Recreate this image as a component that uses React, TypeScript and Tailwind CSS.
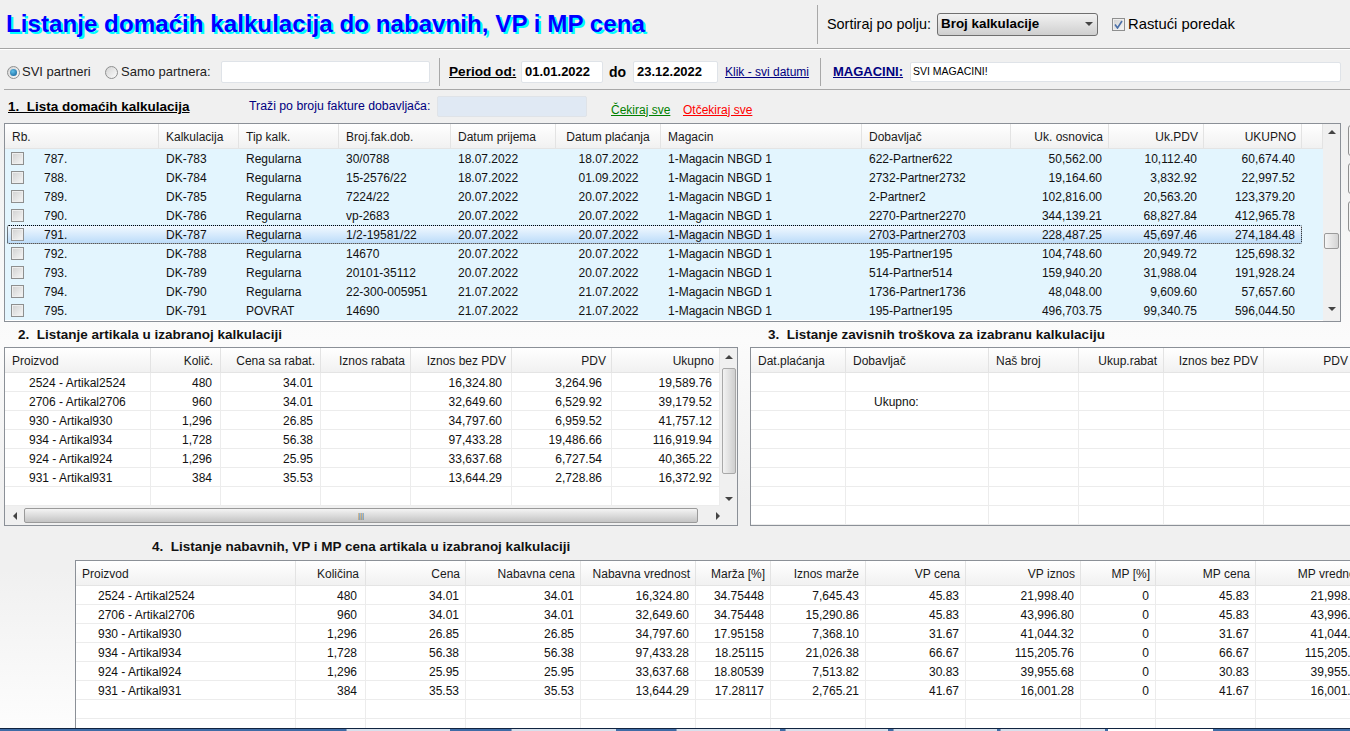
import type { ReactNode } from "react";

type Col = { label: string; head: string; cell: string };

const L = "pl-[7px] text-left";
const R = "pr-[7px] text-right";

const MAIN_COLS: Col[] = [
  { label: "Rb.", head: L, cell: L },
  { label: "Kalkulacija", head: L, cell: L },
  { label: "Tip kalk.", head: L, cell: L },
  { label: "Broj.fak.dob.", head: L, cell: L },
  { label: "Datum prijema", head: L, cell: L },
  { label: "Datum plaćanja", head: "text-center", cell: "text-center" },
  { label: "Magacin", head: L, cell: L },
  { label: "Dobavljač", head: L, cell: L },
  { label: "Uk. osnovica", head: "pr-[5px] text-right", cell: R },
  { label: "Uk.PDV", head: "pr-[5px] text-right", cell: R },
  { label: "UKUPNO", head: "pr-[5px] text-right", cell: R },
  { label: "", head: "", cell: "" },
];

const MAIN_ROWS = [
  ["787.", "DK-783", "Regularna", "30/0788", "18.07.2022", "18.07.2022", "1-Magacin NBGD 1", "622-Partner622", "50,562.00", "10,112.40", "60,674.40", ""],
  ["788.", "DK-784", "Regularna", "15-2576/22", "18.07.2022", "01.09.2022", "1-Magacin NBGD 1", "2732-Partner2732", "19,164.60", "3,832.92", "22,997.52", ""],
  ["789.", "DK-785", "Regularna", "7224/22", "20.07.2022", "20.07.2022", "1-Magacin NBGD 1", "2-Partner2", "102,816.00", "20,563.20", "123,379.20", ""],
  ["790.", "DK-786", "Regularna", "vp-2683", "20.07.2022", "20.07.2022", "1-Magacin NBGD 1", "2270-Partner2270", "344,139.21", "68,827.84", "412,965.78", ""],
  ["791.", "DK-787", "Regularna", "1/2-19581/22", "20.07.2022", "20.07.2022", "1-Magacin NBGD 1", "2703-Partner2703", "228,487.25", "45,697.46", "274,184.48", ""],
  ["792.", "DK-788", "Regularna", "14670", "20.07.2022", "20.07.2022", "1-Magacin NBGD 1", "195-Partner195", "104,748.60", "20,949.72", "125,698.32", ""],
  ["793.", "DK-789", "Regularna", "20101-35112", "20.07.2022", "20.07.2022", "1-Magacin NBGD 1", "514-Partner514", "159,940.20", "31,988.04", "191,928.24", ""],
  ["794.", "DK-790", "Regularna", "22-300-005951", "21.07.2022", "21.07.2022", "1-Magacin NBGD 1", "1736-Partner1736", "48,048.00", "9,609.60", "57,657.60", ""],
  ["795.", "DK-791", "POVRAT", "14690", "21.07.2022", "21.07.2022", "1-Magacin NBGD 1", "195-Partner195", "496,703.75", "99,340.75", "596,044.50", ""],
];

const ITEM_COLS: Col[] = [
  { label: "Proizvod", head: L, cell: "pl-[24px] text-left" },
  { label: "Količ.", head: R, cell: "pr-[8px] text-right" },
  { label: "Cena sa rabat.", head: "pr-[5px] text-right", cell: R },
  { label: "Iznos rabata", head: "pr-[5px] text-right", cell: R },
  { label: "Iznos bez PDV", head: "pr-[5px] text-right", cell: "pr-[9px] text-right" },
  { label: "PDV", head: "pr-[5px] text-right", cell: "pr-[9px] text-right" },
  { label: "Ukupno", head: "pr-[5px] text-right", cell: R },
];

const ITEM_ROWS = [
  ["2524 - Artikal2524", "480", "34.01", "", "16,324.80", "3,264.96", "19,589.76"],
  ["2706 - Artikal2706", "960", "34.01", "", "32,649.60", "6,529.92", "39,179.52"],
  ["930 - Artikal930", "1,296", "26.85", "", "34,797.60", "6,959.52", "41,757.12"],
  ["934 - Artikal934", "1,728", "56.38", "", "97,433.28", "19,486.66", "116,919.94"],
  ["924 - Artikal924", "1,296", "25.95", "", "33,637.68", "6,727.54", "40,365.22"],
  ["931 - Artikal931", "384", "35.53", "", "13,644.29", "2,728.86", "16,372.92"],
  ["", "", "", "", "", "", ""],
];

const COST_COLS: Col[] = [
  { label: "Dat.plaćanja", head: L, cell: L },
  { label: "Dobavljač", head: L, cell: "pl-[28px] text-left" },
  { label: "Naš broj", head: L, cell: L },
  { label: "Ukup.rabat", head: "pr-[6px] text-right", cell: R },
  { label: "Iznos bez PDV", head: "pr-[5px] text-right", cell: R },
  { label: "PDV", head: "pr-[2px] text-right", cell: R },
];

const COST_ROWS = Array.from({ length: 8 }, (_, i) =>
  i === 1 ? ["", "Ukupno:", "", "", "", ""] : ["", "", "", "", "", ""],
);

const PRICE_COLS: Col[] = [
  { label: "Proizvod", head: "pl-[6px] text-left", cell: "pl-[22px] text-left" },
  { label: "Količina", head: "pr-[6px] text-right", cell: "pr-[8px] text-right" },
  { label: "Cena", head: "pr-[5px] text-right", cell: "pr-[6px] text-right" },
  { label: "Nabavna cena", head: "pr-[5px] text-right", cell: "pr-[6px] text-right" },
  { label: "Nabavna vrednost", head: "pr-[5px] text-right", cell: "pr-[6px] text-right" },
  { label: "Marža [%]", head: "pr-[5px] text-right", cell: "pr-[6px] text-right" },
  { label: "Iznos marže", head: "pr-[6px] text-right", cell: "pr-[6px] text-right" },
  { label: "VP cena", head: "pr-[5px] text-right", cell: "pr-[6px] text-right" },
  { label: "VP iznos", head: "pr-[5px] text-right", cell: "pr-[6px] text-right" },
  { label: "MP [%]", head: "pr-[5px] text-right", cell: "pr-[6px] text-right" },
  { label: "MP cena", head: "pr-[5px] text-right", cell: "pr-[6px] text-right" },
  { label: "MP vrednost", head: "pr-[5px] text-right", cell: "pr-[6px] text-right" },
];

const PRICE_ROWS = [
  ["2524 - Artikal2524", "480", "34.01", "34.01", "16,324.80", "34.75448", "7,645.43", "45.83", "21,998.40", "0", "45.83", "21,998.40"],
  ["2706 - Artikal2706", "960", "34.01", "34.01", "32,649.60", "34.75448", "15,290.86", "45.83", "43,996.80", "0", "45.83", "43,996.80"],
  ["930 - Artikal930", "1,296", "26.85", "26.85", "34,797.60", "17.95158", "7,368.10", "31.67", "41,044.32", "0", "31.67", "41,044.32"],
  ["934 - Artikal934", "1,728", "56.38", "56.38", "97,433.28", "18.25115", "21,026.38", "66.67", "115,205.76", "0", "66.67", "115,205.76"],
  ["924 - Artikal924", "1,296", "25.95", "25.95", "33,637.68", "18.80539", "7,513.82", "30.83", "39,955.68", "0", "30.83", "39,955.68"],
  ["931 - Artikal931", "384", "35.53", "35.53", "13,644.29", "17.28117", "2,765.21", "41.67", "16,001.28", "0", "41.67", "16,001.28"],
  ["", "", "", "", "", "", "", "", "", "", "", ""],
  ["", "", "", "", "", "", "", "", "", "", "", ""],
];

function Arrow({ dir }: { dir: "up" | "down" | "left" | "right" }) {
  const points = {
    up: "0,5 8,5 4,1",
    down: "0,1 8,1 4,5",
    left: "5,0 5,8 1,4",
    right: "1,0 1,8 5,4",
  }[dir];
  const box = dir === "up" || dir === "down" ? "0 0 8 6" : "0 0 6 8";
  return (
    <svg viewBox={box} className={dir === "up" || dir === "down" ? "h-[6px] w-[8px]" : "h-[8px] w-[6px]"}>
      <polygon points={points} fill="#444" />
    </svg>
  );
}

function Check({ on = false }: { on?: boolean }) {
  return (
    <span className="flex h-[13px] w-[13px] shrink-0 items-center justify-center border border-[#8e8f8f] bg-gradient-to-br from-[#d0d0d0] to-[#f7f7f7] shadow-[inset_0_0_0_1px_#eeeeee]">
      {on ? (
        <svg viewBox="0 0 9 9" className="h-[9px] w-[9px]">
          <path d="M1 4.5 L3.5 8 L8 1" fill="none" stroke="#4a6fa8" strokeWidth="1.6" />
        </svg>
      ) : null}
    </span>
  );
}

function Radio({ on = false }: { on?: boolean }) {
  return (
    <span className="flex h-[13px] w-[13px] shrink-0 items-center justify-center rounded-full border border-[#8e8f8f] bg-gradient-to-br from-[#d4d4d4] to-[#fbfbfb]">
      {on ? <span className="h-[7px] w-[7px] rounded-full bg-[radial-gradient(circle_at_40%_35%,#5fc0ea,#0f5a92)]" /> : null}
    </span>
  );
}

function Field({ className, children }: { className: string; children?: ReactNode }) {
  return (
    <div className={`flex shrink-0 items-center rounded-[2px] border border-[#dfe3e8] bg-white ${className}`}>{children}</div>
  );
}

function Divider({ className }: { className: string }) {
  return <div className={`w-px shrink-0 bg-[#a8a8a8] ${className}`} />;
}

function HeaderRow({ cols, columns }: { cols: string; columns: Col[] }) {
  return (
    <div className={`grid h-[25px] border-b border-[#e4e4e4] bg-gradient-to-b from-white to-[#f1f1f1] ${cols}`}>
      {columns.map((c, i) => (
        <div
          key={i}
          className={`truncate whitespace-nowrap border-r border-[#e3e3e3] leading-[26px] text-[#1a1a1a] ${c.head}`}
        >
          {c.label}
        </div>
      ))}
    </div>
  );
}

function LinedRows({ cols, columns, rows }: { cols: string; columns: Col[]; rows: string[][] }) {
  return (
    <>
      {rows.map((row, r) => (
        <div key={r} className={`grid h-[19px] bg-white ${cols}`}>
          {row.map((v, i) => (
            <div
              key={i}
              className={`overflow-hidden whitespace-nowrap border-b border-r border-[#ececec] leading-[20px] text-[#111] ${columns[i].cell}`}
            >
              {v}
            </div>
          ))}
        </div>
      ))}
    </>
  );
}

function MainTable() {
  const cols = "grid-cols-[154px_80px_100px_112px_105px_105px_201px_149px_98px_95px_98px_21px]";
  return (
    <div className="flex h-[199px] w-[1337px] shrink-0 border border-[#8b9097] bg-white">
      <div className="w-[1318px] shrink-0">
        <HeaderRow cols={cols} columns={MAIN_COLS} />
        {MAIN_ROWS.map((row, r) => (
          <div key={r} className={`relative grid h-[19px] bg-[#e3f5fe] ${cols}`}>
            {r === 4 ? (
              <span className="absolute inset-y-0 left-[2px] right-[21px] rounded-[2px] border border-dotted border-black bg-gradient-to-b from-[#f2f9ff] to-[#bcdcf9]" />
            ) : null}
            {row.map((v, i) =>
              i === 0 ? (
                <div key={i} className="relative flex h-[19px] pl-[6px] pt-[3px]">
                  <Check />
                  <span className="-mt-[3px] ml-[20px] leading-[20px] text-[#111]">{v}</span>
                </div>
              ) : (
                <div key={i} className={`relative whitespace-nowrap leading-[20px] text-[#111] ${MAIN_COLS[i].cell}`}>
                  {v}
                </div>
              ),
            )}
          </div>
        ))}
      </div>
      <div className="flex w-[17px] flex-col items-center bg-[#f0f0f0]">
        <div className="mt-[5px]">
          <Arrow dir="up" />
        </div>
        <div className="mt-[98px] h-[16px] w-[15px] rounded-[2px] border border-[#9a9a9a] bg-gradient-to-r from-[#f6f6f6] to-[#d4d4d4]" />
        <div className="mt-[57px]">
          <Arrow dir="down" />
        </div>
      </div>
    </div>
  );
}

function ItemsTable() {
  const cols = "grid-cols-[146px_70px_100px_90px_101px_100px_108px]";
  return (
    <div className="flex h-[179px] w-[734px] shrink-0 flex-col border border-[#8b9097] bg-white">
      <div className="flex h-[158px] shrink-0">
        <div className="w-[715px] shrink-0">
          <HeaderRow cols={cols} columns={ITEM_COLS} />
          <LinedRows cols={cols} columns={ITEM_COLS} rows={ITEM_ROWS} />
        </div>
        <div className="flex w-[17px] flex-col items-center bg-[#f0f0f0]">
          <div className="mt-[6px]">
            <Arrow dir="up" />
          </div>
          <div className="mt-[8px] h-[106px] w-[14px] rounded-[2px] border border-[#a8a8a8] bg-gradient-to-r from-[#f2f2f2] to-[#cfcfcf]" />
          <div className="mt-[22px]">
            <Arrow dir="down" />
          </div>
        </div>
      </div>
      <div className="flex h-[19px] items-center bg-[#f0f0f0]">
        <div className="flex w-[19px] justify-center">
          <Arrow dir="left" />
        </div>
        <div className="flex h-[15px] w-[674px] items-center justify-center rounded-[2px] border border-[#9a9a9a] bg-gradient-to-b from-[#f4f4f4] to-[#c4c4c4] text-[8px] leading-none text-[#555]">
          |||
        </div>
        <div className="flex flex-1 justify-center">
          <Arrow dir="right" />
        </div>
      </div>
    </div>
  );
}

function CostsTable() {
  const cols = "grid-cols-[95px_143px_90px_85px_100px_87px]";
  return (
    <div className="h-[179px] flex-1 overflow-hidden border-y border-l border-[#8b9097] bg-white">
      <HeaderRow cols={cols} columns={COST_COLS} />
      <LinedRows cols={cols} columns={COST_COLS} rows={COST_ROWS} />
    </div>
  );
}

function PricesTable() {
  const cols = "grid-cols-[220px_70px_100px_115px_115px_75px_95px_100px_115px_75px_100px_115px]";
  return (
    <div className="ml-[75px] h-[168px] overflow-hidden border-l border-t border-[#8b9097] bg-white">
      <div className="w-[1295px]">
        <HeaderRow cols={cols} columns={PRICE_COLS} />
        <LinedRows cols={cols} columns={PRICE_COLS} rows={PRICE_ROWS} />
      </div>
    </div>
  );
}

function TaskBar() {
  const tab = "h-full border-l border-[#8aa0bd] bg-[#d7e0ec]";
  return (
    <div className="flex h-[3px] shrink-0 border-t border-[#10233f] bg-[#3f6ca6]">
      <div className="w-[346px] shrink-0" />
      <div className={`${tab} w-[104px]`} />
      <div className="w-[61px] shrink-0" />
      <div className={`${tab} w-[105px]`} />
      <div className="w-[60px] shrink-0" />
      <div className={`${tab} w-[104px]`} />
      <div className="w-[5px] shrink-0" />
      <div className={`${tab} w-[103px]`} />
      <div className="w-[5px] shrink-0" />
      <div className={`${tab} w-[104px]`} />
      <div className="w-[3px] shrink-0" />
      <div className={`${tab} w-[105px]`} />
      <div className="w-[3px] shrink-0" />
      <div className="h-full w-[105px] bg-white" />
    </div>
  );
}

export default function App() {
  return (
    <div className="flex h-[731px] w-[1350px] flex-col overflow-hidden bg-[linear-gradient(to_bottom,#f0f0f0_0px,#f0f0f0_120px,#fbfbfb_340px,#f0f0f0_500px,#f0f0f0_570px,#fdfdfd_728px)] font-['Liberation_Sans',sans-serif] text-[12px] text-black">
      {/* naslov + sortiranje */}
      <header className="flex h-[48px] shrink-0 items-center bg-[#f0f0f0]">
        <h1 className="ml-[6px] w-[811px] shrink-0 whitespace-nowrap text-[24.2px] font-bold text-[#0000ff] [text-shadow:2px_2px_0_#00ffff]">
          Listanje domaćih kalkulacija do nabavnih, VP i MP cena
        </h1>
        <Divider className="h-[39px]" />
        <span className="ml-[9px] w-[110px] shrink-0 pt-[1px] text-[14.4px]">Sortiraj po polju:</span>
        <div className="flex h-[23px] w-[161px] shrink-0 items-center justify-between rounded-[3px] border border-[#6f6f6f] bg-gradient-to-b from-[#f2f2f2] to-[#cfcfcf] pl-[3px] pr-[4px] text-[13.4px] font-bold">
          Broj kalkulacije
          <Arrow dir="down" />
        </div>
        <div className="ml-[14px]">
          <Check on />
        </div>
        <span className="ml-[3px] pt-[1px] text-[14.8px]">Rastući poredak</span>
      </header>
      <div className="h-[2px] shrink-0 border-t border-[#a4a4a4] bg-white" />

      {/* filteri */}
      <div className="ml-[4px] flex h-[40px] shrink-0 items-center border-b border-[#a8a8a8] pt-[5px]">
        <div className="ml-[3px]">
          <Radio on />
        </div>
        <span className="ml-[2px] w-[83px] shrink-0 text-[13px] text-[#222]">SVI partneri</span>
        <Radio />
        <span className="ml-[3px] w-[100px] shrink-0 text-[13px] text-[#222]">Samo partnera:</span>
        <Field className="h-[22px] w-[209px]" />
        <Divider className="ml-[9px] h-[28px]" />
        <span className="ml-[9px] w-[72px] shrink-0 text-[13.6px] font-bold underline">Period od:</span>
        <Field className="h-[22px] w-[82px] pl-[3px] text-[13px] font-bold">01.01.2022</Field>
        <span className="ml-[6px] w-[24px] shrink-0 text-[14px] font-bold">do</span>
        <Field className="h-[22px] w-[85px] pl-[3px] text-[13px] font-bold">23.12.2022</Field>
        <a className="ml-[7px] w-[84px] shrink-0 whitespace-nowrap text-[#000080] underline">Klik - svi datumi</a>
        <Divider className="ml-[11px] h-[28px]" />
        <a className="ml-[12px] w-[77px] shrink-0 text-[13px] font-bold text-[#000080] underline">MAGACINI:</a>
        <Field className="h-[20px] w-[431px] pl-[2px] text-[10.5px]">SVI MAGACINI!</Field>
      </div>

      {/* naslov liste */}
      <div className="flex h-[33px] shrink-0 items-center">
        <span className="ml-[8px] mt-[1px] w-[241px] shrink-0 text-[13.5px] font-bold underline">1.&nbsp; Lista domaćih kalkulacija</span>
        <span className="w-[188px] shrink-0 whitespace-nowrap text-[12.3px] text-[#000080]">Traži po broju fakture dobavljača:</span>
        <Field className="h-[21px] w-[150px] !bg-[#e0e9f4]" />
        <a className="ml-[24px] mt-[6px] w-[72px] shrink-0 text-[#008000] underline">Čekiraj sve</a>
        <a className="mt-[6px] text-[#ff0000] underline">Otčekiraj sve</a>
      </div>

      <div className="ml-[4px] flex h-[199px] shrink-0 gap-[7px]">
        <MainTable />
        <div className="flex flex-col gap-[7px] pt-[2px]">
          <div className="h-[31px] w-[20px] rounded-[3px] border border-[#8f8f8f] bg-[#f4f4f4]" />
          <div className="h-[31px] w-[20px] rounded-[3px] border border-[#8f8f8f] bg-[#f4f4f4]" />
          <div className="h-[31px] w-[20px] rounded-[3px] border border-[#8f8f8f] bg-[#f4f4f4]" />
        </div>
      </div>

      <div className="flex h-[25px] shrink-0 items-center pt-[2px] text-[13.5px] font-bold text-[#111]">
        <span className="ml-[18px] w-[750px] shrink-0">2.&nbsp; Listanje artikala u izabranoj kalkulaciji</span>
        <span>3.&nbsp; Listanje zavisnih troškova za izabranu kalkulaciju</span>
      </div>

      <div className="ml-[4px] flex h-[179px] shrink-0 gap-[12px]">
        <ItemsTable />
        <CostsTable />
      </div>

      <div className="flex h-[34px] shrink-0 items-end pb-[3px] pl-[152px] text-[13.5px] font-bold text-[#111]">
        4.&nbsp; Listanje nabavnih, VP i MP cena artikala u izabranoj kalkulaciji
      </div>

      <PricesTable />
      <TaskBar />
    </div>
  );
}
